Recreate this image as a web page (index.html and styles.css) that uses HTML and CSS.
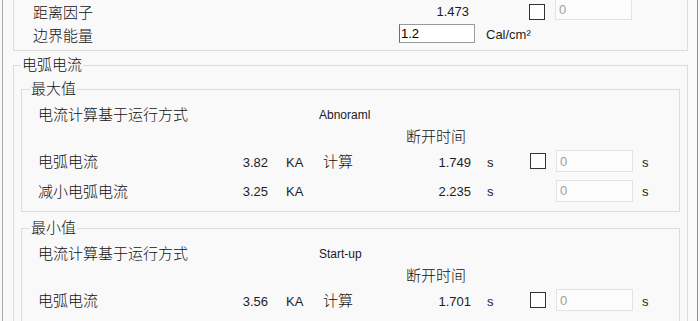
FILE: index.html
```html
<!DOCTYPE html>
<html lang="zh-CN">
<head>
    <meta charset="UTF-8">
    <title>电弧电流</title>
    <link rel="stylesheet" href="styles.css">
</head>
<body>
<div class="panel">

    <div class="group-top">
        <div class="top-row first">
            <span class="label">距离因子</span>
            <span class="num">1.473</span>
            <span></span>
            <input type="checkbox" class="chk">
            <input type="text" class="box-off" value="0" disabled>
        </div>
        <div class="top-row">
            <span class="label low">边界能量</span>
            <input type="text" class="box" value="1.2">
            <span class="unit">Cal/cm²</span>
        </div>
    </div>

    <fieldset class="group outer">
        <legend>电弧电流</legend>

        <fieldset class="group inner">
            <legend>最大值</legend>
            <div class="row r-mode">
                <span class="label">电流计算基于运行方式</span>
                <span></span><span></span>
                <span class="mode">Abnoraml</span>
            </div>
            <div class="row r-head">
                <span></span><span></span><span></span><span></span>
                <span class="head">断开时间</span>
            </div>
            <div class="row r-val">
                <span class="label">电弧电流</span>
                <span class="num">3.82</span>
                <span class="unit">KA</span>
                <span class="calc">计算</span>
                <span class="num">1.749</span>
                <span class="unit s">s</span>
                <input type="checkbox" class="chk">
                <input type="text" class="box-off" value="0" disabled>
                <span class="unit s2">s</span>
            </div>
            <div class="row r-val last">
                <span class="label">减小电弧电流</span>
                <span class="num">3.25</span>
                <span class="unit">KA</span>
                <span></span>
                <span class="num">2.235</span>
                <span class="unit s">s</span>
                <span></span>
                <input type="text" class="box-off" value="0" disabled>
                <span class="unit s2">s</span>
            </div>
        </fieldset>

        <fieldset class="group inner min">
            <legend>最小值</legend>
            <div class="row r-mode">
                <span class="label">电流计算基于运行方式</span>
                <span></span><span></span>
                <span class="mode">Start-up</span>
            </div>
            <div class="row r-head">
                <span></span><span></span><span></span><span></span>
                <span class="head">断开时间</span>
            </div>
            <div class="row r-val">
                <span class="label">电弧电流</span>
                <span class="num">3.56</span>
                <span class="unit">KA</span>
                <span class="calc">计算</span>
                <span class="num">1.701</span>
                <span class="unit s">s</span>
                <input type="checkbox" class="chk">
                <input type="text" class="box-off" value="0" disabled>
                <span class="unit s2">s</span>
            </div>
        </fieldset>
    </fieldset>

</div>
</body>
</html>
```

FILE: styles.css
```css
body {
    margin: 0;
    background-color: #f9f9f9;
    font-family: "Liberation Sans", "Noto Sans CJK SC", sans-serif;
    color: #000;
    overflow: hidden;
}

.panel {
    margin-left: 2px;
    width: 694px;
    height: 321px;
    border-left: 1px solid #a8a8a8;
    border-right: 1px solid #8c8c8c;
    overflow: hidden;
}

/* top box, its upper edge is scrolled away */
.group-top {
    margin: 0 9px 0 10px;
    height: 50px;
    border: 1px solid #dcdcdc;
    border-top: none;
}

.top-row {
    display: grid;
    grid-template-columns: 366px 76px 54px 26px 77px;
    align-items: center;
    height: 22px;
    margin-left: 19px;
}

.top-row.first {
    height: 20px;
    margin-bottom: 2px;
}

.top-row.first .num {
    padding-right: 6px;
    padding-bottom: 3px;
}

.top-row.first .chk,
.top-row.first .box-off {
    align-self: end;
    margin-bottom: 5px;
}

.top-row .unit {
    padding-left: 11px;
}

.label.low {
    padding-top: 4px;
}

.group {
    margin: 0;
    padding: 0 7px;
    border: 1px solid #dcdcdc;
    min-width: 0;
}

.group legend {
    padding: 0 1px;
    font-size: 15px;
    line-height: 18px;
    font-weight: 300;
    color: #111;
}

.outer {
    margin: 5px 9px 0 10px;
    padding-top: 6px;
    height: 300px;
}

.inner {
    padding: 4px 0 5px 8px;
}

.inner legend {
    padding: 0 1px;
}

.inner.min {
    margin-top: 7px;
}

.row {
    display: grid;
    grid-template-columns: 180px 50px 51px 87px 65px 59px 26px 77px 1fr;
    align-items: center;
    margin-left: 8px;
}

.r-mode {
    height: 25px;
}

.r-head {
    height: 20px;
}

.r-val {
    height: 30px;
}

.r-val.last {
    height: 29px;
}

.label,
.head,
.calc {
    font-size: 15px;
    line-height: 20px;
    font-weight: 300;
    color: #111;
    white-space: nowrap;
}

.calc {
    padding-left: 4px;
}

.num {
    font-size: 13px;
    color: #1e1e1e;
    text-align: right;
}

.unit {
    font-size: 13px;
    color: #1e1e1e;
    padding-left: 18px;
    white-space: nowrap;
}

.unit.s {
    padding-left: 16px;
}

.unit.s2 {
    padding-left: 9px;
}

.mode {
    font-size: 12px;
    color: #1a1a2a;
    white-space: nowrap;
}

.chk {
    appearance: none;
    margin: 0;
    width: 16px;
    height: 16px;
    border: 1px solid #333;
    background-color: #fff;
    margin-top: -2px;
}

.box-off {
    appearance: none;
    box-sizing: border-box;
    margin: 0;
    width: 77px;
    height: 22px;
    padding: 0 0 0 3px;
    border: 1px solid #e3e3e3;
    background-color: #fcfcfc;
    font-family: "Liberation Sans", sans-serif;
    font-size: 13px;
    color: #a0a0a0;
    margin-top: -2px;
}

.box {
    appearance: none;
    box-sizing: border-box;
    margin: 0;
    width: 76px;
    height: 19px;
    padding: 0 0 0 1px;
    border: 1px solid #9a9a9a;
    border-left-color: #6d6d6d;
    background-color: #fff;
    font-family: "Liberation Sans", sans-serif;
    font-size: 13px;
    color: #000;
    margin-top: -2px;
}
```
